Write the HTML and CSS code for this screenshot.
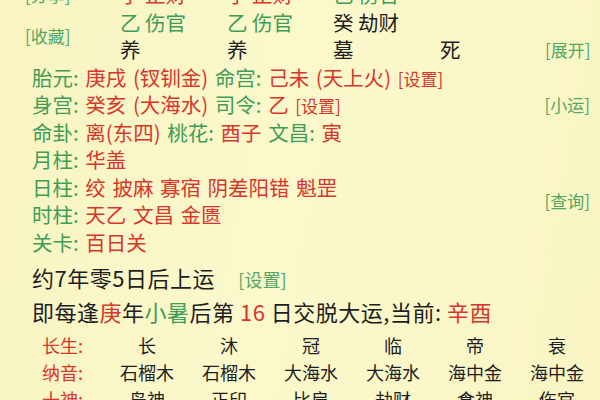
FILE: index.html
```html
<!DOCTYPE html>
<html>
<head>
<meta charset="utf-8">
<link rel="stylesheet" href="styles.css">
</head>
<body>
<div class="page">
  <div class="pillars">
    <div class="link side r0">[分享]</div>
    <div class="cell red">子 正财</div>
    <div class="cell red">子 正财</div>
    <div class="cell green">己 伤官</div>
    <div class="cell"></div>
    <div class="cell"></div>

    <div class="link side r12">[收藏]</div>
    <div class="cell green">乙 伤官</div>
    <div class="cell green">乙 伤官</div>
    <div class="cell dark">癸 劫财</div>
    <div class="cell"></div>
    <div class="cell"></div>

    <div class="cell dark">养</div>
    <div class="cell dark">养</div>
    <div class="cell dark">墓</div>
    <div class="cell dark">死</div>
    <div class="cell link right">[展开]</div>
  </div>

  <div class="info">
    <div class="line"><span class="g">胎元:</span> <span class="r">庚戌 (钗钏金)</span> <span class="g">命宫:</span> <span class="r">己未 (天上火)</span> <span class="r small">[设置]</span></div>
    <div class="aside a2 link">[小运]</div>
    <div class="line"><span class="g">身宫:</span> <span class="r">癸亥 (大海水)</span> <span class="g">司令:</span> <span class="r">乙</span> <span class="r small">[设置]</span></div>
    <div class="line"><span class="g">命卦:</span> <span class="r">离(东四)</span> <span class="g">桃花:</span> <span class="r">酉子</span> <span class="g">文昌:</span> <span class="r">寅</span></div>
    <div class="line"><span class="g">月柱:</span> <span class="r">华盖</span></div>
    <div class="line"><span class="g">日柱:</span> <span class="r">绞 披麻 寡宿 阴差阳错 魁罡</span></div>
    <div class="aside a56 link">[查询]</div>
    <div class="line"><span class="g">时柱:</span> <span class="r">天乙 文昌 金匮</span></div>
    <div class="line"><span class="g">关卡:</span> <span class="r">百日关</span></div>
  </div>

  <div class="luck">
    <div class="big">约7年零5日后上运 <span class="link setting">[设置]</span></div>
    <div class="big">即每逢<span class="r">庚</span>年<span class="g">小暑</span>后第 <span class="r">16</span> 日交脱大运,当前: <span class="r">辛酉</span></div>
  </div>

  <div class="table">
    <div class="lbl">长生:</div>
    <div class="v">长</div><div class="v">沐</div><div class="v">冠</div><div class="v">临</div><div class="v">帝</div><div class="v">衰</div>
    <div class="lbl">纳音:</div>
    <div class="v">石榴木</div><div class="v">石榴木</div><div class="v">大海水</div><div class="v">大海水</div><div class="v">海中金</div><div class="v">海中金</div>
    <div class="lbl">十神:</div>
    <div class="v">枭神</div><div class="v">正印</div><div class="v">比肩</div><div class="v">劫财</div><div class="v">食神</div><div class="v">伤官</div>
  </div>
</div>
</body>
</html>
```

FILE: styles.css
```css
html, body {
  margin: 0;
  padding: 0;
}
body {
  width: 600px;
  height: 400px;
  overflow: hidden;
  background: linear-gradient(100deg, #f8f4c2 0%, #fbf8cc 45%, #f9f5c4 100%);
  font-family: "Noto Sans CJK SC", "Noto Sans", sans-serif;
  color: #1e1e1e;
}
.page {
  margin-top: -19px;
}
.r { color: #d8352b; }
.g { color: #3f9d57; }
.red { color: #d8352b; }
.green { color: #3f9d57; }
.dark { color: #1e1e1e; }
.link { color: #4fa866; font-size: 17px; letter-spacing: 0; word-spacing: 0; }
.small { font-size: 17px; }

.pillars {
  display: grid;
  grid-template-columns: 120px 107px 106px 107px 105px 55px;
  grid-template-rows: repeat(3, 27.5px);
  font-size: 20.5px;
  line-height: 27.5px;
}
.side {
  padding-left: 25px;
  grid-column: 1;
}
.r0 { grid-row: 1; }
.r12 { grid-row: 2 / span 2; align-self: center; }
.right { text-align: left; }

.info {
  display: grid;
  grid-template-columns: 1fr auto;
  grid-auto-rows: 27.5px;
  padding-left: 32px;
  padding-right: 10px;
  font-size: 20.5px;
  line-height: 27.5px;
}
.line {
  grid-column: 1;
  white-space: nowrap;
  word-spacing: 2px;
}
.aside {
  grid-column: 2;
}
.a2 { grid-row: 2; }
.a56 { grid-row: 5 / span 2; align-self: center; }

.luck {
  margin-top: 5px;
  padding-left: 32px;
}
.big {
  font-size: 22px;
  line-height: 32px;
  letter-spacing: 0.5px;
  white-space: nowrap;
}
.big .setting {
  font-size: 18px;
  margin-left: 18px;
}

.table {
  margin-top: 5px;
  display: grid;
  grid-template-columns: 64px repeat(6, 82px);
  grid-auto-rows: 27px;
  padding-left: 42px;
  font-size: 18px;
  line-height: 27px;
}
.lbl { color: #d8352b; }
.v { text-align: center; }
```
